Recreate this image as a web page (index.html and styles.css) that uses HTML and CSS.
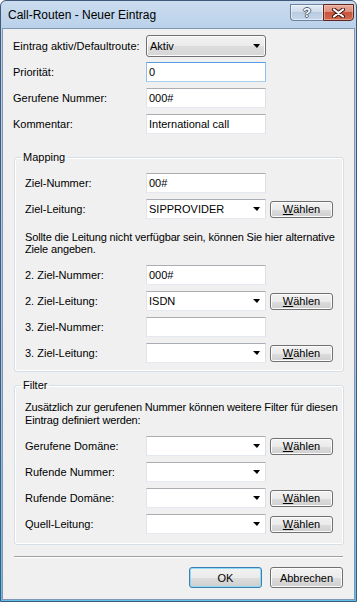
FILE: index.html
```html
<!DOCTYPE html>
<html lang="de">
<head>
    <meta charset="UTF-8">
    <title>Call-Routen - Neuer Eintrag</title>
    <link rel="stylesheet" href="styles.css">
</head>
<body>
<div class="window">
    <div class="titlebar">
        <span class="title">Call-Routen - Neuer Eintrag</span>
        <div class="caption-buttons">
            <span class="cap-btn help">?</span>
            <span class="cap-btn close">
                <svg width="13" height="10" viewBox="0 0 13 10">
                    <path d="M2 1.5 L11 8.5 M11 1.5 L2 8.5" stroke="#3a1410" stroke-width="4" stroke-linecap="round"/>
                    <path d="M2 1.5 L11 8.5 M11 1.5 L2 8.5" stroke="#fff" stroke-width="2.2" stroke-linecap="round"/>
                </svg>
            </span>
        </div>
    </div>

    <div class="client">
        <div class="form-grid top">
            <label>Eintrag aktiv/Defaultroute:</label>
            <div class="dropbutton">Aktiv<span class="arrow"></span></div>
            <label>Priorität:</label>
            <div class="textbox focus">0</div>
            <label>Gerufene Nummer:</label>
            <div class="textbox">000#</div>
            <label>Kommentar:</label>
            <div class="textbox">International call</div>
        </div>

        <fieldset class="group mapping">
            <legend>Mapping</legend>
            <div class="form-grid">
                <label>Ziel-Nummer:</label>
                <div class="textbox">00#</div>
                <label>Ziel-Leitung:</label>
                <div class="textbox combo">SIPPROVIDER<span class="arrow"></span></div>
                <span class="button small"><u>W</u>ählen</span>
            </div>
            <p class="note">Sollte die Leitung nicht verfügbar sein, können Sie hier alternative<br>Ziele angeben.</p>
            <div class="form-grid">
                <label>2. Ziel-Nummer:</label>
                <div class="textbox">000#</div>
                <label>2. Ziel-Leitung:</label>
                <div class="textbox combo">ISDN<span class="arrow"></span></div>
                <span class="button small"><u>W</u>ählen</span>
                <label>3. Ziel-Nummer:</label>
                <div class="textbox"></div>
                <label>3. Ziel-Leitung:</label>
                <div class="textbox combo"><span class="arrow"></span></div>
                <span class="button small"><u>W</u>ählen</span>
            </div>
        </fieldset>

        <fieldset class="group filter">
            <legend>Filter</legend>
            <p class="note">Zusätzlich zur gerufenen Nummer können weitere Filter für diesen<br>Eintrag definiert werden:</p>
            <div class="form-grid">
                <label>Gerufene Domäne:</label>
                <div class="textbox combo"><span class="arrow"></span></div>
                <span class="button small"><u>W</u>ählen</span>
                <label>Rufende Nummer:</label>
                <div class="textbox combo"><span class="arrow"></span></div>
                <label>Rufende Domäne:</label>
                <div class="textbox combo"><span class="arrow"></span></div>
                <span class="button small"><u>W</u>ählen</span>
                <label>Quell-Leitung:</label>
                <div class="textbox combo"><span class="arrow"></span></div>
                <span class="button small"><u>W</u>ählen</span>
            </div>
        </fieldset>

        <div class="separator"></div>

        <div class="dialog-buttons">
            <span class="button default">OK</span>
            <span class="button">Abbrechen</span>
        </div>
    </div>
</div>
</body>
</html>
```

FILE: styles.css
```css
html, body
{
    margin: 0;
    padding: 0;
}
body
{
    width: 357px;
    height: 602px;
    overflow: hidden;
    font-family: "Liberation Sans", Arial, sans-serif;
    font-size: 11px;
    color: #000;
}

.window
{
    box-sizing: border-box;
    width: 357px;
    height: 602px;
    display: flex;
    flex-direction: column;
    border: 1px solid #41597a;
    border-radius: 6px 6px 0 0;
    padding: 0 1px 1px 1px;
    background: linear-gradient(to bottom, #cbdcee 0, #b9d1ea 28px, #a8c6e4 60%, #5cc0ea 100%);
}

.titlebar
{
    height: 27px;
    display: flex;
    justify-content: space-between;
    align-items: flex-start;
}
.title
{
    font-size: 12px;
    line-height: 14px;
    margin: 7px 0 0 6px;
    color: #000;
}
.caption-buttons
{
    display: flex;
    margin: 3px 1px 0 0;
}
.cap-btn
{
    box-sizing: border-box;
    height: 17px;
    display: flex;
    align-items: center;
    justify-content: center;
}
.help
{
    width: 33px;
    border: 1px solid #6a819f;
    border-right: none;
    border-radius: 0 0 0 4px;
    background: linear-gradient(to bottom, #e3ebf4 0, #cfdcea 45%, #b9cbe0 50%, #c6d7ea 100%);
    color: #fff;
    font-weight: bold;
    font-size: 13px;
    text-shadow: -1px 0 #4e5f73, 1px 0 #4e5f73, 0 -1px #4e5f73, 0 1px #4e5f73;
    box-shadow: inset 0 0 0 1px rgba(255,255,255,0.5);
}
.close
{
    width: 31px;
    border: 1px solid #5b2620;
    border-radius: 0 0 4px 0;
    background: linear-gradient(to bottom, #e9a999 0, #dd8f7c 45%, #c7543d 50%, #d06a4f 100%);
    box-shadow: inset 0 0 0 1px rgba(255,220,210,0.45);
}

.client
{
    flex: 1;
    border: 1px solid #8196b2;
    background: #f0f0f0;
    padding: 4px 10px 0 10px;
    display: flex;
    flex-direction: column;
}

.form-grid
{
    display: grid;
    grid-template-columns: 121px 120px 67px;
    grid-auto-rows: 26px;
    align-items: center;
}
.form-grid.top
{
    grid-template-columns: 133px 120px;
}
.form-grid label
{
    grid-column: 1;
    white-space: nowrap;
}

.textbox
{
    box-sizing: border-box;
    height: 20px;
    line-height: 18px;
    padding-left: 2px;
    background: #fff;
    border: 1px solid;
    border-color: #abadb3 #dbdfe6 #e3e9ef #e2e3ea;
    position: relative;
    white-space: nowrap;
}
.textbox.focus
{
    border-color: #569de5 #8fc0ee #a9cff2 #8fc0ee;
}
.arrow
{
    position: absolute;
    right: 5px;
    top: 7px;
    width: 0;
    height: 0;
    border-left: 4px solid transparent;
    border-right: 3px solid transparent;
    border-top: 4px solid #000;
}

.dropbutton
{
    box-sizing: border-box;
    height: 22px;
    line-height: 20px;
    padding-left: 3px;
    border: 1px solid #707070;
    border-radius: 3px;
    background: linear-gradient(to bottom, #f2f2f2 0, #ebebeb 50%, #dddddd 51%, #d6d6d6 100%);
    box-shadow: inset 0 0 0 1px #fbfbfb;
    position: relative;
}
.dropbutton .arrow
{
    top: 8px;
}

.button
{
    box-sizing: border-box;
    display: flex;
    align-items: center;
    justify-content: center;
    width: 73px;
    height: 21px;
    border: 1px solid #707070;
    border-radius: 3px;
    background: linear-gradient(to bottom, #f2f2f2 0, #ebebeb 50%, #dddddd 51%, #cfcfcf 100%);
    box-shadow: inset 0 0 0 1px #fcfcfc;
}
.button.small
{
    width: 63px;
    height: 17px;
    margin-left: 4px;
}
.button.default
{
    border-color: #3c7fb1;
    box-shadow: inset 0 0 0 1px #8fd8f6;
}

.group
{
    margin: 14px 1px 0 1px;
    padding: 6px 10px 5px 10px;
    border: 1px solid #d5dfe5;
    border-radius: 3px;
    box-shadow: inset 0 0 0 1px #fff;
}
.group legend
{
    margin-left: -4px;
    padding: 0 2px;
    line-height: 13px;
}
.group.filter
{
    margin-top: 7px;
    padding: 9px 10px 7px 10px;
}

.note
{
    margin: 9px -10px 7px 0;
    line-height: 12px;
    white-space: nowrap;
    letter-spacing: -0.15px;
}
.filter .note
{
    margin: 0 -10px 6px 0;
    line-height: 13px;
}

.separator
{
    margin: 11px 1px 0 1px;
    border-top: 1px solid #a0a0a0;
    border-bottom: 1px solid #fff;
}

.dialog-buttons
{
    display: flex;
    justify-content: flex-end;
    gap: 8px;
    margin-top: 9px;
    margin-right: 1px;
}
```
